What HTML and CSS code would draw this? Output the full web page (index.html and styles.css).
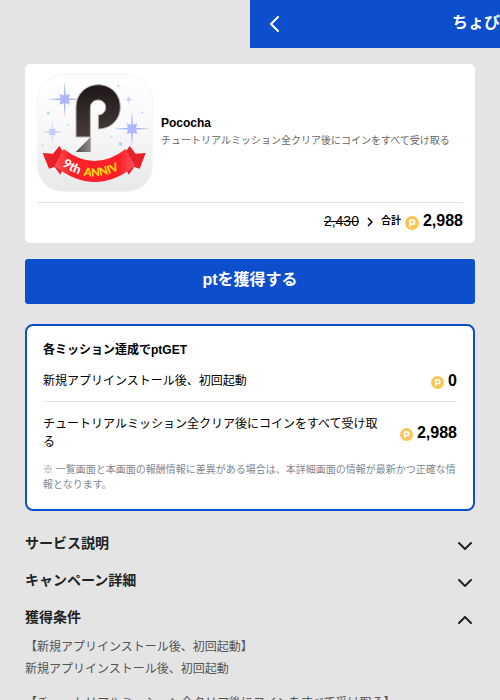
FILE: index.html
```html
<!DOCTYPE html>
<html lang="ja">
<head>
<meta charset="utf-8">
<meta name="viewport" content="width=device-width, initial-scale=1">
<title>Pococha</title>
<link rel="stylesheet" href="styles.css">
</head>
<body>
<svg class="defs" aria-hidden="true">
  <symbol id="coin" viewBox="0 0 14 14">
    <circle cx="7" cy="7" r="7" fill="#ffc44f"/>
    <path d="M5 10.7V4.2H7.5a2 2 0 0 1 0 4H5" fill="none" stroke="#fff" stroke-width="1.8"/>
  </symbol>
  <symbol id="chevron" viewBox="0 0 14 8">
    <path d="M1 1l6 6 6-6" fill="none" stroke="currentColor" stroke-width="2" stroke-linecap="round"/>
  </symbol>
</svg>
<header class="header">
  <a class="back" href="#" aria-label="戻る">
    <svg viewBox="0 0 10 16" width="10" height="16"><path d="M9 1L2 8l7 7" fill="none" stroke="#fff" stroke-width="2" stroke-linecap="round"/></svg>
  </a>
  <div class="site-name">ちょびリッチ</div>
</header>
<main class="page">
  <section class="card">
    <div class="summary">
      <svg class="app-icon" viewBox="35 30 348 354" role="img" aria-label="Pococha 9th ANNIV">
        <defs>
          <linearGradient id="tile" x1="0" y1="0" x2="0" y2="1"><stop offset="0" stop-color="#fff"/><stop offset=".45" stop-color="#f8f8f8"/><stop offset="1" stop-color="#e8e8e8"/></linearGradient>
          <linearGradient id="ink" x1="0" y1="0" x2="0" y2="1"><stop offset="0" stop-color="#1f1717"/><stop offset="1" stop-color="#463d3c"/></linearGradient>
          <linearGradient id="foot" x1="0" y1="0" x2="1" y2="0"><stop offset="0" stop-color="#514948"/><stop offset="1" stop-color="#918a89"/></linearGradient>
          <linearGradient id="spark" x1="0" y1="0" x2="1" y2="1"><stop offset="0" stop-color="#9fdcff"/><stop offset=".5" stop-color="#a9b6fa"/><stop offset="1" stop-color="#dcb4f5"/></linearGradient>
          <linearGradient id="band" x1="0" y1="0" x2="1" y2="0"><stop offset="0" stop-color="#fb5558"/><stop offset=".2" stop-color="#fc2029"/><stop offset=".8" stop-color="#fc1f28"/><stop offset="1" stop-color="#fb5558"/></linearGradient>
          <path id="star" d="M0-54L3-12 16-16 12-3 54 0 12 3 16 16 3 12 0 54-3 12-16 16-12 3-54 0-12-3-16-16-3-12Z"/>
          <path id="arc" d="M108 303Q205 375 314 296"/>
        </defs>
        <rect x="36" y="32" width="346" height="350" rx="76" fill="url(#tile)" stroke="#f5f5f5" stroke-width="3"/>
        <g fill="url(#spark)">
          <use href="#star" transform="translate(118 106)"/>
          <use href="#star" transform="translate(320 194)"/>
          <use href="#star" transform="translate(81 204) scale(.66)" opacity=".65"/>
          <use href="#star" transform="translate(310 106) scale(.35)" opacity=".65"/>
        </g>
        <g fill="#b3e6f7"><circle cx="69" cy="147" r="5"/><circle cx="279" cy="66" r="4"/><circle cx="258" cy="218" r="3"/><circle cx="285" cy="240" r="5" fill="#b4caff"/><circle cx="129" cy="183" r="3"/><circle cx="351" cy="146" r="3" fill="#cfc5fa"/><circle cx="52" cy="243" r="3"/></g>
        <path d="M152 219V129C152 91 181 62 219 62S285 91 285 129 256 195 219 195V153C232 153 241 143 241 130S231 108 218 108 195 118 195 130V219Z" fill="url(#ink)" stroke="#b8b2b1" stroke-width="3"/>
        <path d="M196 219V264H151Z" fill="url(#foot)"/>
        <path d="M52 267L83 269 102 246 126 281 105 332 88 309 71 314ZM361 267L331 269 313 246 288 281 310 332 327 309 343 314Z" fill="#e91f29"/>
        <path d="M115 255Q208 327 301 255L329 306Q208 402 88 306Z" fill="url(#band)"/>
        <text class="ribbon"><textPath href="#arc" startOffset="2"><tspan class="ribbon-year">9th</tspan><tspan class="ribbon-word" dx="14">ANNIV</tspan></textPath></text>
      </svg>
      <div class="summary-text">
        <h1 class="app-name">Pococha</h1>
        <p class="app-condition">チュートリアルミッション全クリア後にコインをすべて受け取る</p>
      </div>
    </div>
    <div class="total">
      <s class="old-price">2,430</s>
      <svg class="arrow" viewBox="0 0 6 10"><path d="M1 1l4 4-4 4" fill="none" stroke="#000" stroke-width="1.5"/></svg>
      <span class="total-label">合計</span>
      <span class="points"><svg class="coin"><use href="#coin"/></svg>2,988</span>
    </div>
  </section>
  <button class="get-button" type="button">ptを獲得する</button>
  <section class="missions">
    <h2 class="missions-title">各ミッション達成でptGET</h2>
    <ul class="mission-list">
      <li class="mission"><span>新規アプリインストール後、初回起動</span><span class="points"><svg class="coin"><use href="#coin"/></svg>0</span></li>
      <li class="mission"><span>チュートリアルミッション全クリア後にコインをすべて受け取る</span><span class="points"><svg class="coin"><use href="#coin"/></svg>2,988</span></li>
    </ul>
    <p class="note">※ 一覧画面と本画面の報酬情報に差異がある場合は、本詳細画面の情報が最新かつ正確な情報となります。</p>
  </section>
  <section class="details">
    <h2><button class="toggle" type="button" aria-expanded="false">サービス説明<svg class="chevron"><use href="#chevron"/></svg></button></h2>
    <h2><button class="toggle" type="button" aria-expanded="false">キャンペーン詳細<svg class="chevron"><use href="#chevron"/></svg></button></h2>
    <h2><button class="toggle" type="button" aria-expanded="true">獲得条件<svg class="chevron"><use href="#chevron"/></svg></button></h2>
    <div class="conditions">
      <p>【新規アプリインストール後、初回起動】<br>新規アプリインストール後、初回起動</p>
      <p>【チュートリアルミッション全クリア後にコインをすべて受け取る】</p>
    </div>
  </section>
</main>
</body>
</html>
```
FILE: styles.css
```css
* {
  box-sizing: border-box;
}

body {
  margin: 0;
  overflow-x: hidden;
  background: #e4e4e4;
  color: #000;
  font-family: "Liberation Sans", "Noto Sans CJK JP", sans-serif;
  font-size: 12px;
  line-height: 18px;
}

h1, h2, p, ul {
  margin: 0;
  padding: 0;
}

button {
  font-family: inherit;
  cursor: pointer;
}

.defs {
  position: absolute;
  width: 0;
  height: 0;
}

.header {
  display: grid;
  grid-template-columns: 48px 1fr 48px;
  align-items: center;
  width: 100%;
  height: 48px;
  margin-left: 50%;
  background: #0d4ecc;
  color: #fff;
}

.back {
  display: flex;
  justify-content: center;
}

.site-name {
  padding-bottom: 2px;
  font-size: 16px;
  font-weight: bold;
  line-height: 24px;
  text-align: center;
}

.page {
  padding: 16px 5% 0;
}

.card {
  padding: 10px 12px;
  border-radius: 5px;
  background: #fff;
}

.summary {
  display: flex;
  align-items: center;
  gap: 8px;
  padding-bottom: 10px;
  border-bottom: 1px solid #dce2e8;
}

.summary-text {
  padding-bottom: 2px;
}

.app-icon {
  flex: none;
  width: 116px;
  height: 118px;
}

.ribbon {
  font-family: Lato, sans-serif;
  font-weight: 900;
}

.ribbon-year {
  fill: #fff;
  font-size: 38px;
}

.ribbon-word {
  fill: #ffe000;
  font-size: 34px;
}

.app-name {
  font-size: 12px;
  line-height: 18px;
}

.app-condition {
  color: #666;
  font-size: 10px;
  line-height: 18px;
}

.total {
  display: flex;
  align-items: center;
  justify-content: flex-end;
  padding-top: 6px;
  line-height: 24px;
}

.old-price {
  font-size: 14px;
}

.arrow {
  width: 6px;
  height: 10px;
  margin: 2px 8px 0;
}

.total-label {
  margin-right: 4px;
  font-size: 10px;
  font-weight: bold;
}

.points {
  display: flex;
  flex: none;
  align-items: center;
  gap: 4px;
  font-size: 16px;
  font-weight: bold;
}

.coin {
  width: 14px;
  height: 14px;
  margin-top: 3px;
}

.get-button {
  display: block;
  width: 100%;
  margin: 16px 0 20px;
  padding: 9px 16px 12px;
  border: 0;
  border-radius: 3px;
  background: #0d4ecc;
  color: #fff;
  font-size: 16px;
  font-weight: bold;
  line-height: 24px;
}

.missions {
  padding: 15px 16px 17px;
  border: 2px solid #0d4ecc;
  border-radius: 8px;
  background: #fff;
}

.missions-title {
  font-size: 12px;
}

.mission-list {
  list-style: none;
}

.mission {
  display: flex;
  align-items: center;
  justify-content: space-between;
  gap: 16px;
  padding: 13px 0 11px;
}

.mission .coin {
  width: 13px;
  height: 13px;
}

.mission + .mission {
  border-top: 1px solid #e4e4e4;
}

.note {
  color: #808892;
  font-size: 10px;
  line-height: 15px;
}

.details {
  padding-top: 22px;
}

.toggle {
  display: flex;
  align-items: center;
  justify-content: space-between;
  width: 100%;
  margin-bottom: 16px;
  padding: 0 3px 0 0;
  border: 0;
  background: none;
  color: #222;
  font-size: 14px;
  font-weight: bold;
  line-height: 21px;
}

.chevron {
  width: 14px;
  height: 8px;
  margin-top: 4px;
}

.toggle[aria-expanded="true"] {
  margin-bottom: 8px;
}

.toggle[aria-expanded="true"] .chevron {
  transform: rotate(180deg);
}

.conditions {
  color: #555;
  line-height: 22px;
}

.conditions p {
  margin-bottom: 12px;
}
```
